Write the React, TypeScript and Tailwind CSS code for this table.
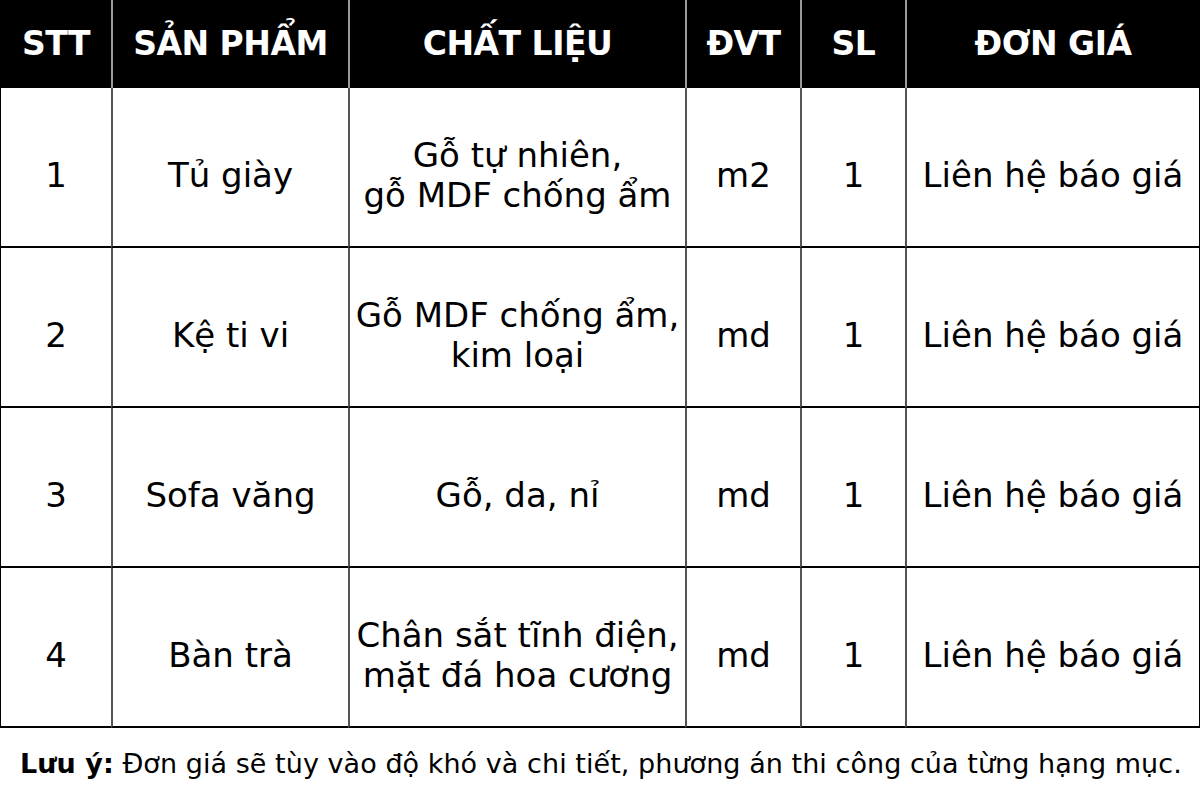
const rows = [
  { stt: "1", name: "Tủ giày", mat: ["Gỗ tự nhiên,", "gỗ MDF chống ẩm"], unit: "m2" },
  { stt: "2", name: "Kệ ti vi", mat: ["Gỗ MDF chống ẩm,", "kim loại"], unit: "md" },
  { stt: "3", name: "Sofa văng", mat: ["Gỗ, da, nỉ"], unit: "md" },
  { stt: "4", name: "Bàn trà", mat: ["Chân sắt tĩnh điện,", "mặt đá hoa cương"], unit: "md" },
]

const headers = ["STT", "SẢN PHẨM", "CHẤT LIỆU", "ĐVT", "SL", "ĐƠN GIÁ"]

export default function App() {
  return (
    <div className="w-[1200px] h-[800px] bg-white text-black font-['DejaVu_Sans',sans-serif]">
      <div className="grid grid-cols-[110px_237px_337px_115px_105px_294px] border-l border-r border-black">
        {headers.map((h, i) => (
          <div
            key={h}
            className={`h-[88px] bg-black text-white flex items-center justify-center text-[33px] font-bold tracking-[-0.5px] ${i > 0 ? "border-l-2 border-[#9a9a9a]" : ""}`}
          >
            {h}
          </div>
        ))}
        {rows.map((r) => {
          const cells = [r.stt, r.name, r.mat, r.unit, "1", "Liên hệ báo giá"]
          return cells.map((c, i) => (
            <div
              key={r.stt + "-" + i}
              className={`h-[160px] pt-[15px] flex flex-col items-center justify-center text-center text-[34px] leading-[40px] whitespace-nowrap border-b-2 border-black ${i > 0 ? "border-l-2 border-l-[#555]" : ""}`}
            >
              {Array.isArray(c) ? c.map((line) => <span key={line}>{line}</span>) : c}
            </div>
          ))
        })}
      </div>
      <p className="pl-[20px] pt-[20px] text-[27px] leading-[32px] whitespace-nowrap tracking-[0.05px]">
        <span className="font-bold">Lưu ý:</span> Đơn giá sẽ tùy vào độ khó và chi tiết, phương án thi công của từng hạng mục.
      </p>
    </div>
  )
}
